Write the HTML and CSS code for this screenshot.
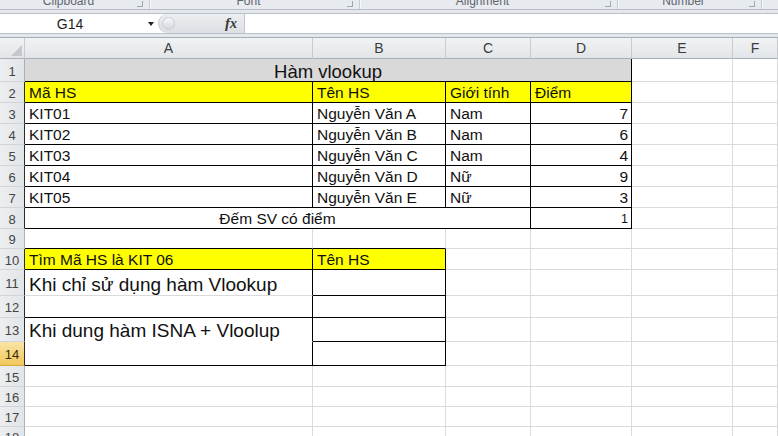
FILE: index.html
```html
<!DOCTYPE html>
<html lang="vi">
<head>
    <meta charset="UTF-8">
    <title>Hàm vlookup</title>
    <link rel="stylesheet" href="styles.css">
</head>
<body>
    <div class="ribbon">
        <div class="group g1"><span class="label">Clipboard</span><span class="launch"></span></div>
        <div class="group g2"><span class="label">Font</span><span class="launch"></span></div>
        <div class="group g3"><span class="label">Alignment</span><span class="launch"></span></div>
        <div class="group g4"><span class="label">Number</span><span class="launch"></span></div>
        <div class="group g5"></div>
    </div>

    <div class="formula-area">
        <div class="fbar">
            <div class="namebox">
                <span class="name">G14</span>
                <span class="drop"></span>
            </div>
            <div class="pill">
                <span class="knob"></span>
                <span class="fx"><i>f</i>x</span>
            </div>
            <div class="finput"></div>
        </div>
    </div>

    <table class="sheet">
        <colgroup>
            <col class="w-hd"><col class="w-a"><col class="w-b"><col class="w-c"><col class="w-d"><col class="w-e"><col class="w-f">
        </colgroup>
        <tr class="h21">
            <th class="corner"><svg width="11" height="11" viewBox="0 0 11 11"><path d="M11 0 L11 11 L0 11 Z" fill="#c4c8cd"/></svg></th>
            <th class="ch">A</th><th class="ch">B</th><th class="ch">C</th><th class="ch">D</th><th class="ch">E</th><th class="ch">F</th>
        </tr>
        <tr class="h23">
            <td class="rh">1</td>
            <td colspan="4" class="title r b">Hàm vlookup</td>
            <td></td><td></td>
        </tr>
        <tr class="h21">
            <td class="rh k">2</td>
            <td class="y r b">Mã HS</td><td class="y r b">Tên HS</td><td class="y r b">Giới tính</td><td class="y r b">Điểm</td>
            <td></td><td></td>
        </tr>
        <tr class="h21">
            <td class="rh k">3</td>
            <td class="r b">KIT01</td><td class="r b">Nguyễn Văn A</td><td class="r b">Nam</td><td class="num r b">7</td>
            <td></td><td></td>
        </tr>
        <tr class="h21">
            <td class="rh k">4</td>
            <td class="r b">KIT02</td><td class="r b">Nguyễn Văn B</td><td class="r b">Nam</td><td class="num r b">6</td>
            <td></td><td></td>
        </tr>
        <tr class="h21">
            <td class="rh k">5</td>
            <td class="r b">KIT03</td><td class="r b">Nguyễn Văn C</td><td class="r b">Nam</td><td class="num r b">4</td>
            <td></td><td></td>
        </tr>
        <tr class="h21">
            <td class="rh k">6</td>
            <td class="r b">KIT04</td><td class="r b">Nguyễn Văn D</td><td class="r b">Nữ</td><td class="num r b">9</td>
            <td></td><td></td>
        </tr>
        <tr class="h21">
            <td class="rh k">7</td>
            <td class="r b">KIT05</td><td class="r b">Nguyễn Văn E</td><td class="r b">Nữ</td><td class="num r b">3</td>
            <td></td><td></td>
        </tr>
        <tr class="h21">
            <td class="rh k">8</td>
            <td colspan="3" class="mid r b">Đếm SV có điểm</td><td class="num small r b">1</td>
            <td></td><td></td>
        </tr>
        <tr class="h20">
            <td class="rh">9</td>
            <td class="b"></td><td class="b"></td><td></td><td></td><td></td><td></td>
        </tr>
        <tr class="h21">
            <td class="rh k">10</td>
            <td class="y r b">Tìm Mã HS là KIT 06</td><td class="y r b">Tên HS</td>
            <td></td><td></td><td></td><td></td>
        </tr>
        <tr class="h26">
            <td class="rh k">11</td>
            <td class="big r">Khi chỉ sử dụng hàm Vlookup</td><td class="r b"></td>
            <td></td><td></td><td></td><td></td>
        </tr>
        <tr class="h22">
            <td class="rh k">12</td>
            <td class="r b"></td><td class="r b"></td>
            <td></td><td></td><td></td><td></td>
        </tr>
        <tr class="h24">
            <td class="rh k">13</td>
            <td class="big r nob">Khi dung hàm ISNA + Vloolup</td><td class="r b"></td>
            <td></td><td></td><td></td><td></td>
        </tr>
        <tr class="h24">
            <td class="rh k sel">14</td>
            <td class="r b"></td><td class="r b"></td>
            <td></td><td></td><td></td><td></td>
        </tr>
        <tr class="h21">
            <td class="rh">15</td>
            <td></td><td></td><td></td><td></td><td></td><td></td>
        </tr>
        <tr class="h20">
            <td class="rh">16</td>
            <td></td><td></td><td></td><td></td><td></td><td></td>
        </tr>
        <tr class="h20">
            <td class="rh">17</td>
            <td></td><td></td><td></td><td></td><td></td><td></td>
        </tr>
        <tr class="h20">
            <td class="rh">18</td>
            <td></td><td></td><td></td><td></td><td></td><td></td>
        </tr>
    </table>
</body>
</html>
```

FILE: styles.css
```css
body{
    margin: 0;
    background-color: #ffffff;
    font-family: "Liberation Sans", Arial, sans-serif;
    overflow: hidden;
    width: 778px;
    height: 436px;
}

/* ribbon bottom edge */
.ribbon{
    display: flex;
    height: 10px;
    box-sizing: border-box;
    background-color: #e7eaee;
    border-bottom: 1px solid #b7bec7;
    overflow: hidden;
}
.group{
    position: relative;
    display: flex;
    justify-content: center;
    padding-right: 12px;
    box-sizing: border-box;
    border-right: 1px solid #c5cbd3;
    box-shadow: 1px 0 0 #f6f8fa;
}
.g1{ width: 150px; }
.g2{ width: 210px; }
.g3{ width: 258px; }
.g4{ width: 144px; }
.g5{ flex: 1; border-right: none; }
.label{
    font-size: 12px;
    line-height: 12px;
    margin-top: -5px;
    color: #5f6670;
}
.launch{
    position: absolute;
    right: 6px;
    top: 1px;
    width: 5px;
    height: 5px;
    border-right: 1px solid #9ea6b0;
    border-bottom: 1px solid #9ea6b0;
}

/* formula bar */
.formula-area{
    height: 28px;
    box-sizing: border-box;
    padding: 3px 0;
    background-color: #e4e7eb;
    border-bottom: 1px solid #a4acb6;
}
.fbar{
    display: flex;
    height: 21px;
    box-sizing: border-box;
    border-top: 1px solid #b9c0c9;
    border-bottom: 1px solid #b9c0c9;
    background-color: #ffffff;
}
.namebox{
    width: 158px;
    display: flex;
    align-items: center;
}
.name{
    width: 140px;
    text-align: center;
    font-size: 14px;
    color: #1e1e1e;
}
.drop{
    width: 0;
    height: 0;
    margin-left: 8px;
    border-left: 3px solid transparent;
    border-right: 3px solid transparent;
    border-top: 4px solid #222;
}
.pill{
    width: 87px;
    display: flex;
    align-items: center;
    justify-content: space-between;
    padding: 0 7px 0 3px;
    box-sizing: border-box;
    background: linear-gradient(#eceef1, #dcdfe3);
    border-left: 1px solid #c3c8ce;
    border-right: 1px solid #c3c8ce;
    border-radius: 10px 0 0 10px;
}
.knob{
    width: 11px;
    height: 11px;
    border-radius: 50%;
    background: linear-gradient(#f7f8f9, #d3d7dc);
    border: 1px solid #c8cdd3;
}
.fx{
    font-family: "Liberation Serif", "Times New Roman", serif;
    font-style: italic;
    font-weight: bold;
    font-size: 14px;
    color: #3a3a3a;
}
.fx i{
    font-size: 15px;
}
.finput{
    flex: 1;
}

/* sheet */
.sheet{
    width: 778px;
    table-layout: fixed;
    border-collapse: separate;
    border-spacing: 0;
}
.w-hd{ width: 25px; }
.w-a{ width: 288px; }
.w-b{ width: 133px; }
.w-c{ width: 85px; }
.w-d{ width: 101px; }
.w-e{ width: 101px; }
.w-f{ width: 45px; }

.h20{ height: 20px; }
.h21{ height: 21px; }
.h22{ height: 22px; }
.h23{ height: 23px; }
.h24{ height: 24px; }
.h26{ height: 26px; }

.sheet th{
    padding: 0;
    font-weight: normal;
    font-size: 14px;
    line-height: 16px;
    color: #3c3c3c;
    background: linear-gradient(#f1f2f4, #e2e5e8);
    border-right: 1px solid #c6cbd1;
    border-bottom: 1px solid #a9b0b9;
}
.sheet th.corner{
    text-align: right;
    vertical-align: bottom;
    line-height: 0;
    padding: 0 2px 2px 0;
}
.sheet td{
    padding: 0 4px;
    vertical-align: bottom;
    font-size: 15.5px;
    line-height: 18px;
    color: #111;
    white-space: nowrap;
    overflow: hidden;
    border-right: 1px solid #dadada;
    border-bottom: 1px solid #dadada;
}
.sheet td.rh{
    padding: 3px 0 0;
    text-align: center;
    vertical-align: middle;
    font-size: 13px;
    line-height: 14px;
    color: #444;
    background: linear-gradient(90deg, #eceef0, #e2e5e8);
    border-right: 1px solid #a9b0b9;
    border-bottom: 1px solid #d1d5da;
}
.sheet td.rh.k{
    border-right-color: #2b2b2b;
}
.sheet td.rh.sel{
    background: linear-gradient(#f9e4a6, #f2c75c);
    color: #3a2c00;
    border-bottom-color: #d6a93c;
}
.sheet td.r{ border-right-color: #000; }
.sheet td.b{ border-bottom-color: #000; }
.sheet td.nob{ border-bottom-color: #fff; }

.title{
    text-align: center;
    font-size: 18.5px !important;
    background-color: #d9d9d9;
}
.y{ background-color: #ffff00; }
.num{ text-align: right; padding-right: 3px !important; }
.small{ font-size: 12.5px !important; }
.mid{ text-align: center; }
.big{ font-size: 19px !important; line-height: 21px !important; }
```
